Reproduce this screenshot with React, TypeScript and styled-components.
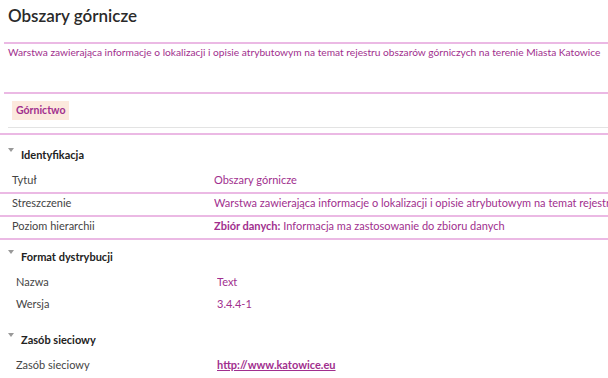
import styled, { createGlobalStyle } from "styled-components";

const GlobalStyle = createGlobalStyle`
  body {
    margin: 0;
    background: #fff;
    font-family: "Lato", "Open Sans", sans-serif;
    font-size: 11px;
    color: #333;
  }
`;

const PINK_LINE = "#ebb9e4";
const PURPLE = "#a12f8e";

const Page = styled.div`
  width: 608px;
  height: 378px;
  overflow: hidden;
`;

const Title = styled.h1`
  margin: 0;
  padding: 4px 0 0 8px;
  height: 38px;
  font-family: "Lato", sans-serif;
  font-size: 17px;
  font-weight: 600;
  line-height: 24px;
  color: #2a2a2a;
`;

const Abstract = styled.div`
  margin-left: 4px;
  border-top: 2px solid ${PINK_LINE};
  border-bottom: 2px solid ${PINK_LINE};
  height: 47px;
  padding: 1px 0 0 4px;
  font-size: 10.2px;
  line-height: 14px;
  color: ${PURPLE};
  white-space: nowrap;
`;

const Tags = styled.div`
  margin-left: 8px;
  padding: 7px 0 0 4px;
  box-sizing: border-box;
  border-bottom: 1px solid #e3e3e3;
  display: flex;
  height: 34px;
`;

const Tag = styled.span`
  background: #fce9dd;
  color: ${PURPLE};
  font-size: 10.5px;
  font-weight: 700;
  height: 19px;
  line-height: 19px;
  padding: 0 4px;
`;

const TagsEnd = styled.div`
  margin-top: 5px;
  border-top: 2px solid ${PINK_LINE};
`;

const Section = styled.section<{ $indent: number }>`
  padding-top: ${(p) => p.$indent}px;
`;

const SectionHead = styled.div`
  display: flex;
  align-items: center;
  gap: 7px;
  height: 22px;
  padding-left: 8px;
  font-weight: 700;
  color: #222;
`;

const Caret = styled.span`
  width: 0;
  height: 0;
  border-left: 3px solid transparent;
  border-right: 3px solid transparent;
  border-top: 4px solid #999;
  margin-top: -8px;
`;

const Rows = styled.div<{ $gap: number }>`
  margin-top: ${(p) => p.$gap}px;
`;

const Row = styled.div<{ $lined?: boolean; $labelX: number; $valueX: number }>`
  display: grid;
  grid-template-columns: ${(p) => p.$valueX - p.$labelX}px 1fr;
  padding-left: ${(p) => p.$labelX}px;
  height: ${(p) => (p.$lined ? 21 : 22)}px;
  line-height: 18px;
  white-space: nowrap;
  overflow: hidden;
  border-bottom: ${(p) => (p.$lined ? `2px solid ${PINK_LINE}` : "none")};
`;

const Label = styled.span`
  color: #444;
`;

const Value = styled.span`
  color: ${PURPLE};
  overflow: hidden;
  b {
    font-weight: 700;
  }
`;

const Link = styled.a`
  color: ${PURPLE};
  font-weight: 700;
  text-decoration: underline;
`;

export default function App() {
  return (
    <Page>
      <GlobalStyle />
      <Title>Obszary górnicze</Title>
      <Abstract>
        Warstwa zawierająca informacje o lokalizacji i opisie atrybutowym na temat rejestru
        obszarów górniczych na terenie Miasta Katowice
      </Abstract>
      <Tags>
        <Tag>Górnictwo</Tag>
      </Tags>
      <TagsEnd />

      <Section $indent={8}>
        <SectionHead>
          <Caret />
          Identyfikacja
        </SectionHead>
        <Rows $gap={6}>
          <Row $lined $labelX={12} $valueX={214}>
            <Label>Tytuł</Label>
            <Value>Obszary górnicze</Value>
          </Row>
          <Row $lined $labelX={12} $valueX={214}>
            <Label>Streszczenie</Label>
            <Value>
              Warstwa zawierająca informacje o lokalizacji i opisie atrybutowym na temat
              rejestru obszarów górniczych na terenie Miasta Katowice
            </Value>
          </Row>
          <Row $lined $labelX={12} $valueX={214}>
            <Label>Poziom hierarchii</Label>
            <Value>
              <b>Zbiór danych:</b> Informacja ma zastosowanie do zbioru danych
            </Value>
          </Row>
        </Rows>
      </Section>

      <Section $indent={5}>
        <SectionHead>
          <Caret />
          Format dystrybucji
        </SectionHead>
        <Rows $gap={6}>
          <Row $labelX={16} $valueX={217}>
            <Label>Nazwa</Label>
            <Value>Text</Value>
          </Row>
          <Row $labelX={16} $valueX={217}>
            <Label>Wersja</Label>
            <Value>3.4.4-1</Value>
          </Row>
        </Rows>
      </Section>

      <Section $indent={11}>
        <SectionHead>
          <Caret />
          Zasób sieciowy
        </SectionHead>
        <Rows $gap={6}>
          <Row $labelX={16} $valueX={217}>
            <Label>Zasób sieciowy</Label>
            <Value>
              <Link href="#">http://www.katowice.eu</Link>
            </Value>
          </Row>
        </Rows>
      </Section>
    </Page>
  );
}
